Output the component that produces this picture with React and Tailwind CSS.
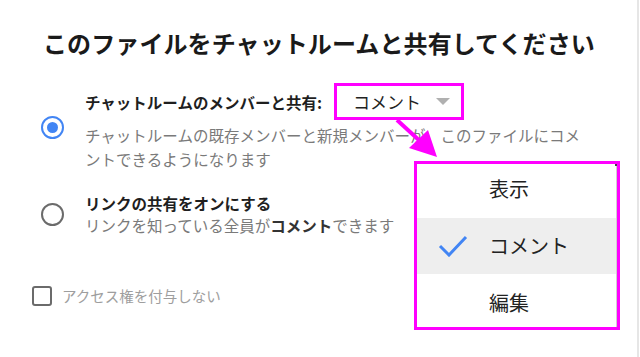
import React from 'react';

const font = { fontFamily: '"Noto Sans CJK JP", "Noto Sans", sans-serif' };

function Radio({ checked }) {
  return checked ? (
    <div className="w-[23px] h-[23px] rounded-full border-[2.5px] border-[#4285f4] flex items-center justify-center shrink-0">
      <div className="w-[11px] h-[11px] rounded-full bg-[#4285f4]" />
    </div>
  ) : (
    <div className="w-[23px] h-[23px] rounded-full border-[2.5px] border-[#6b6b6b] shrink-0" />
  );
}

export default function App() {
  return (
    <div className="relative w-[640px] h-[357px] bg-white overflow-hidden" style={font}>
      {/* right edge line */}
      <div className="absolute right-[1px] top-0 h-full w-[2px] bg-[#e6e6e6]" />

      <div className="pl-[41px] pt-[28px]">
        <h1 className="text-[24px] leading-[30px] font-bold text-[#1a1a1a] pl-[2px] tracking-[0.1px]">
          このファイルをチャットルームと共有してください
        </h1>

        {/* option 1 */}
        <div className="flex items-center mt-[25px]">
          <Radio checked />
          <div className="ml-[21px]">
            <div className="flex items-center">
              <span className="text-[15.5px] font-bold text-[#1f1f1f] pt-[2px]">チャットルームのメンバーと共有:</span>
              <div className="ml-[12px] w-[130px] h-[37px] border-[3px] border-[#ff00ff] flex items-center pl-[16px]">
                <span className="text-[17px] text-[#222] leading-none">コメント</span>
                <span className="ml-[15px] w-0 h-0 border-l-[7px] border-r-[7px] border-t-[7px] border-l-transparent border-r-transparent border-t-[#b0b0b0]" />
              </div>
            </div>
            <p className="mt-[3px] w-[505px] text-[15.5px] leading-[24px] text-[#7a7a7a]">
              チャットルームの既存メンバーと新規メンバーが、このファイルにコメントできるようになります
            </p>
          </div>
        </div>

        {/* option 2 */}
        <div className="flex items-center mt-[21px]">
          <Radio />
          <div className="ml-[21px]">
            <div className="text-[15.5px] leading-[22px] font-bold text-[#1f1f1f]">リンクの共有をオンにする</div>
            <p className="text-[15.5px] leading-[23px] text-[#7a7a7a]">
              リンクを知っている全員が<span className="font-bold text-[#333]">コメント</span>できます
            </p>
          </div>
        </div>

        {/* checkbox */}
        <div className="flex items-center mt-[49px] -ml-[9px]">
          <div className="w-[20px] h-[20px] rounded-[3px] border-2 border-[#6b6b6b]" />
          <span className="ml-[10px] text-[14.5px] leading-[20px] text-[#9e9e9e]">アクセス権を付与しない</span>
        </div>
      </div>

      {/* arrow */}
      <svg className="absolute left-0 top-0" width="640" height="357">
        <line x1="397" y1="120" x2="421" y2="142" stroke="#ff00ff" strokeWidth="4" />
        <polygon points="409,148 428,130 437,157" fill="#ff00ff" />
      </svg>

      {/* dropdown menu */}
      <div className="absolute left-[414px] top-[161px] w-[206px] h-[169px] border-[3px] border-[#ff00ff] bg-white">
        <div className="relative h-full border-r border-[#d0d0d0] flex flex-col">
          <div className="absolute right-[-1px] top-0 w-[2px] h-[2px] bg-[#444]" />
          <div className="h-[54px] flex items-center pl-[72px] pb-[4px] text-[20px] text-[#222]">表示</div>
          <div className="h-[56px] flex items-center bg-[#eeeeee] relative pl-[72px] text-[20px] text-[#222]">
            <svg className="absolute left-[21px] top-[17px]" width="30" height="22" viewBox="0 0 30 22">
              <path d="M2 11 L11 20 L28 2" fill="none" stroke="#4285f4" strokeWidth="3" />
            </svg>
            コメント
          </div>
          <div className="h-[53px] flex items-center pl-[72px] pt-[4px] text-[20px] text-[#222]">編集</div>
        </div>
      </div>
    </div>
  );
}
